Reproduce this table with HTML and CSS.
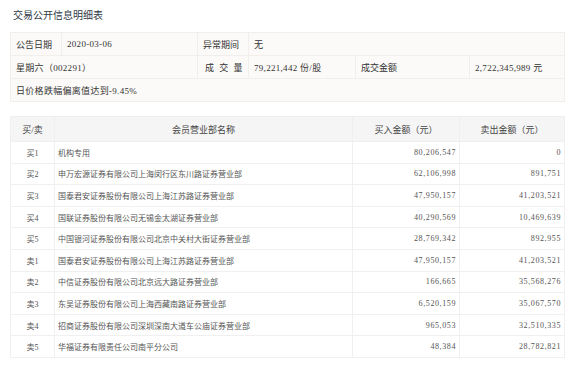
FILE: index.html
```html
<!DOCTYPE html>
<html lang="zh-CN">
<head>
  <meta charset="UTF-8">
  <title>交易公开信息明细表</title>
  <link rel="stylesheet" href="styles.css">
</head>
<body>

  <h1 class="page-title">交易公开信息明细表</h1>

  <table class="info-table">
    <colgroup>
      <col style="width: 51px">
      <col style="width: 136px">
      <col style="width: 51px">
      <col style="width: 107px">
      <col style="width: 114px">
      <col>
    </colgroup>
    <tr>
      <td>公告日期</td>
      <td class="num">2020-03-06</td>
      <td>异常期间</td>
      <td colspan="3">无</td>
    </tr>
    <tr>
      <td colspan="2" class="num">星期六（002291）</td>
      <td class="spaced">成 交 量</td>
      <td class="num">79,221,442 份/股</td>
      <td>成交金额</td>
      <td class="num">2,722,345,989 元</td>
    </tr>
    <tr>
      <td colspan="6" class="num">日价格跌幅偏离值达到-9.45%</td>
    </tr>
  </table>

  <table class="trade-table">
    <colgroup>
      <col style="width: 44px">
      <col style="width: 298px">
      <col style="width: 107px">
      <col>
    </colgroup>
    <thead>
      <tr>
        <th>买/卖</th>
        <th>会员营业部名称</th>
        <th>买入金额（元）</th>
        <th>卖出金额（元）</th>
      </tr>
    </thead>
    <tbody id="trade-rows"></tbody>
  </table>

  <script>
    const trades = [
      { side: "买1", name: "机构专用", buy: "80,206,547", sell: "0" },
      { side: "买2", name: "申万宏源证券有限公司上海闵行区东川路证券营业部", buy: "62,106,998", sell: "891,751" },
      { side: "买3", name: "国泰君安证券股份有限公司上海江苏路证券营业部", buy: "47,950,157", sell: "41,203,521" },
      { side: "买4", name: "国联证券股份有限公司无锡金太湖证券营业部", buy: "40,290,569", sell: "10,469,639" },
      { side: "买5", name: "中国银河证券股份有限公司北京中关村大街证券营业部", buy: "28,769,342", sell: "892,955" },
      { side: "卖1", name: "国泰君安证券股份有限公司上海江苏路证券营业部", buy: "47,950,157", sell: "41,203,521" },
      { side: "卖2", name: "中信证券股份有限公司北京远大路证券营业部", buy: "166,665", sell: "35,568,276" },
      { side: "卖3", name: "东吴证券股份有限公司上海西藏南路证券营业部", buy: "6,520,159", sell: "35,067,570" },
      { side: "卖4", name: "招商证券股份有限公司深圳深南大道车公庙证券营业部", buy: "965,053", sell: "32,510,335" },
      { side: "卖5", name: "华福证券有限责任公司南平分公司", buy: "48,384", sell: "28,782,821" }
    ];

    const body = document.getElementById("trade-rows");
    trades.forEach(t => {
      const row = document.createElement("tr");
      row.innerHTML = `
        <td class="side">${t.side}</td>
        <td class="name">${t.name}</td>
        <td class="num">${t.buy}</td>
        <td class="num">${t.sell}</td>`;
      body.appendChild(row);
    });
  </script>

</body>
</html>
```

FILE: styles.css
```css
* {
  box-sizing: border-box;
}

body {
  margin: 0;
  padding: 0 15px 0 10px;
  background: #fff;
  color: #333;
  font-family: "Liberation Serif", "Noto Sans CJK SC", serif;
  font-size: 9px;
}

.page-title {
  margin: 0;
  padding: 9px 3px 0;
  height: 32px;
  font-size: 10px;
  font-weight: normal;
  line-height: 14px;
  color: #2f3a48;
}

table {
  width: 555px;
  border-collapse: collapse;
  table-layout: fixed;
}

/* 顶部信息表 */
.info-table td {
  height: 23px;
  padding: 0 5px;
  background: #fbfaf8;
  border: 1px solid #f1efec;
  white-space: nowrap;
}

.info-table .num {
  letter-spacing: 0.3px;
}

.info-table .spaced {
  padding-left: 7px;
  word-spacing: 3px;
}

/* 营业部明细表 */
.trade-table {
  margin-top: 14px;
}

.trade-table th {
  height: 25px;
  background: #f5f5f5;
  border: 1px solid #efefef;
  font-weight: normal;
  font-size: 9px;
  color: #444;
}

.trade-table td {
  height: 21.6px;
  padding: 0 3px;
  border: 1px solid #f0f0f0;
  font-size: 8px;
  color: #555;
  white-space: nowrap;
}

.trade-table .side {
  text-align: center;
}

.trade-table .num {
  text-align: right;
  letter-spacing: 0.6px;
}
```
